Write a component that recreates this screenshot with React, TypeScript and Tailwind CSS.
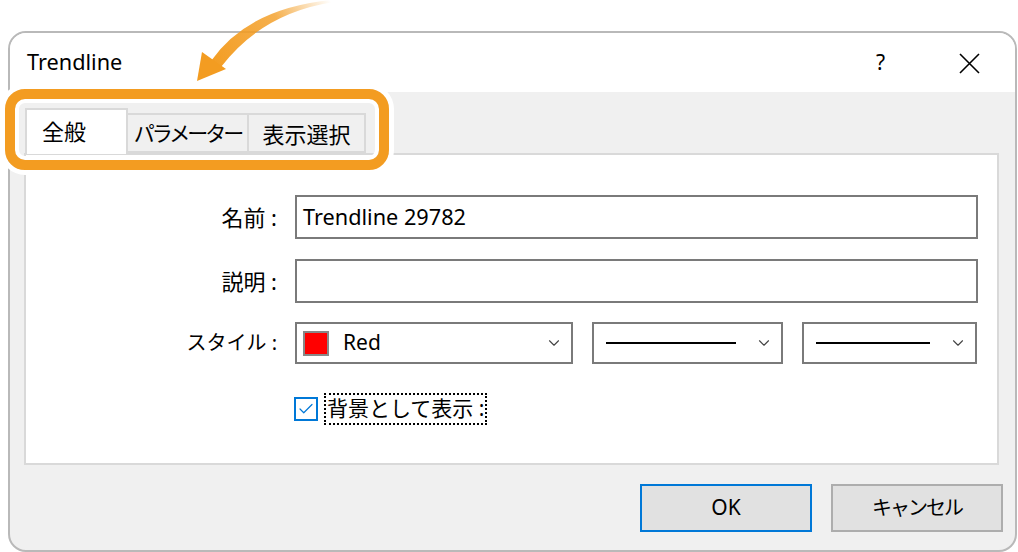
import { Check, ChevronDown } from "lucide-react";

const ui = "font-['Noto_Sans','Noto_Sans_CJK_JP',sans-serif]";

function LineSelect({ width, line }: { width: string; line: string }) {
  return (
    <div className={`${width} h-[42px] border-2 border-[#7a7a7a] bg-white flex items-center pl-[12px] pr-[8px]`}>
      <div className={`${line} h-[2px] bg-black`} />
      <div className="flex-1" />
      <ChevronDown size={18} strokeWidth={1.5} className="text-[#444]" />
    </div>
  );
}

function Tab({ label, active, width, extra }: { label: string; active?: boolean; width: string; extra?: string }) {
  if (active) {
    return (
      <div className={`${width} h-[46px] pt-[5px] pl-[15px] bg-white border-2 border-b-0 border-[#d9d9d9] text-[22px] text-black relative z-10 -mb-[2px]`}>
        {label}
      </div>
    );
  }
  return (
    <div className={`${width} h-[40px] mt-[5px] pt-[3px] bg-[#f0f0f0] border-2 border-l-0 border-[#d9d9d9] text-black text-center ${extra ?? "text-[22px]"}`}>
      {label}
    </div>
  );
}

export default function App() {
  return (
    <div className={`${ui} relative w-[1018px] h-[552px] bg-white overflow-hidden pt-[31px] pl-[8px]`}>
      {/* Dialog window */}
      <div className="w-[1009px] h-[521px] border-2 border-[#b9b9b9] rounded-[18px] overflow-hidden flex flex-col bg-[#f0f0f0]">
        {/* Title bar */}
        <div className="h-[59px] bg-white flex items-center pl-[17px] pr-[35px] shrink-0">
          <span className="text-[21.7px] text-black">Trendline</span>
          <div className="flex-1" />
          <span className="text-[21px] text-black mr-[74px]">?</span>
          <svg width="21" height="21" viewBox="0 0 21 21" className="mt-[1px]">
            <path d="M1 1 L20 20 M20 1 L1 20" stroke="#000" strokeWidth="1.6" />
          </svg>
        </div>

        {/* Body */}
        <div className="flex-1 flex flex-col pl-[14px] pr-[16px] pt-[16px]">
          <div className="flex items-start h-[45px] pl-[1px]">
            <Tab label="全般" active width="w-[103px]" />
            <Tab label="パラメーター" width="w-[121px]" extra="text-[21px] tracking-[-3px]" />
            <Tab label="表示選択" width="w-[117px]" />
          </div>

          <div className="h-[312px] bg-white border-2 border-[#d9d9d9] pt-[40px] pr-[19px]">
            <div className="grid grid-cols-[251px_1fr] gap-x-[18px] items-center">
              <div className="text-right text-[22px] text-black">名前 :</div>
              <div className="h-[44px] border-2 border-[#7a7a7a] flex items-center pl-[6px] text-[21.7px] text-black">
                Trendline 29782
              </div>

              <div className="text-right text-[22px] text-black mt-[20px]">説明 :</div>
              <div className="h-[44px] border-2 border-[#7a7a7a] mt-[20px]" />

              <div className="text-right text-[20px] text-black mt-[19px]">スタイル :</div>
              <div className="flex gap-[19px] mt-[19px]">
                <div className="w-[278px] h-[42px] border-2 border-[#7a7a7a] flex items-center pl-[6px] pr-[8px]">
                  <div className="w-[26px] h-[25px] bg-[#ff0000] border-2 border-[#888]" />
                  <span className="ml-[14px] text-[21px] text-black">Red</span>
                  <div className="flex-1" />
                  <ChevronDown size={18} strokeWidth={1.5} className="text-[#444]" />
                </div>
                <LineSelect width="w-[191px]" line="w-[130px]" />
                <LineSelect width="w-[175px]" line="w-[114px]" />
              </div>

              <div />
              <div className="flex items-center mt-[29px] -ml-[1px]">
                <div className="w-[24px] h-[24px] border-2 border-[#0078d7] bg-white flex items-center justify-center">
                  <Check size={18} strokeWidth={1.6} className="text-[#0078d7]" />
                </div>
                <div className="ml-[6px] px-[1px] h-[32px] flex items-center border-2 border-dotted border-black text-[21px] text-black">
                  背景として表示 :
                </div>
              </div>
            </div>
          </div>

          {/* Buttons */}
          <div className="flex justify-end gap-[19px] pt-[19px] -mr-[4px]">
            <button className="w-[172px] h-[48px] bg-[#e1e1e1] border-2 border-[#0078d7] text-[21px] text-black">
              OK
            </button>
            <button className="w-[172px] h-[48px] bg-[#e1e1e1] border-2 border-[#adadad] text-[20px] tracking-[-2px] text-black">
              キャンセル
            </button>
          </div>
        </div>
      </div>

      {/* Orange highlight around tabs */}
      <div className="absolute left-[5px] top-[89px] w-[384px] h-[81px] rounded-[20px] border-[10px] border-[#f39c21] shadow-[0_0_0_5px_#ffffff,inset_0_0_0_4px_#ffffff]" />

      {/* Curved arrow */}
      <svg className="absolute left-0 top-0" width="360" height="100" viewBox="0 0 360 100">
        <defs>
          <linearGradient id="arrowFade" x1="330" y1="0" x2="210" y2="70" gradientUnits="userSpaceOnUse">
            <stop offset="0" stopColor="#f39c21" stopOpacity="0" />
            <stop offset="0.4" stopColor="#f39c21" stopOpacity="0.8" />
            <stop offset="1" stopColor="#f39c21" />
          </linearGradient>
        </defs>
        <path d="M332 0 Q 248 8 211 61 L 221 67 Q 262 13 334 2 Z" fill="url(#arrowFade)" />
        <path d="M197 81 L 202 52 L 226 69 Z" fill="#f39c21" />
      </svg>
    </div>
  );
}
